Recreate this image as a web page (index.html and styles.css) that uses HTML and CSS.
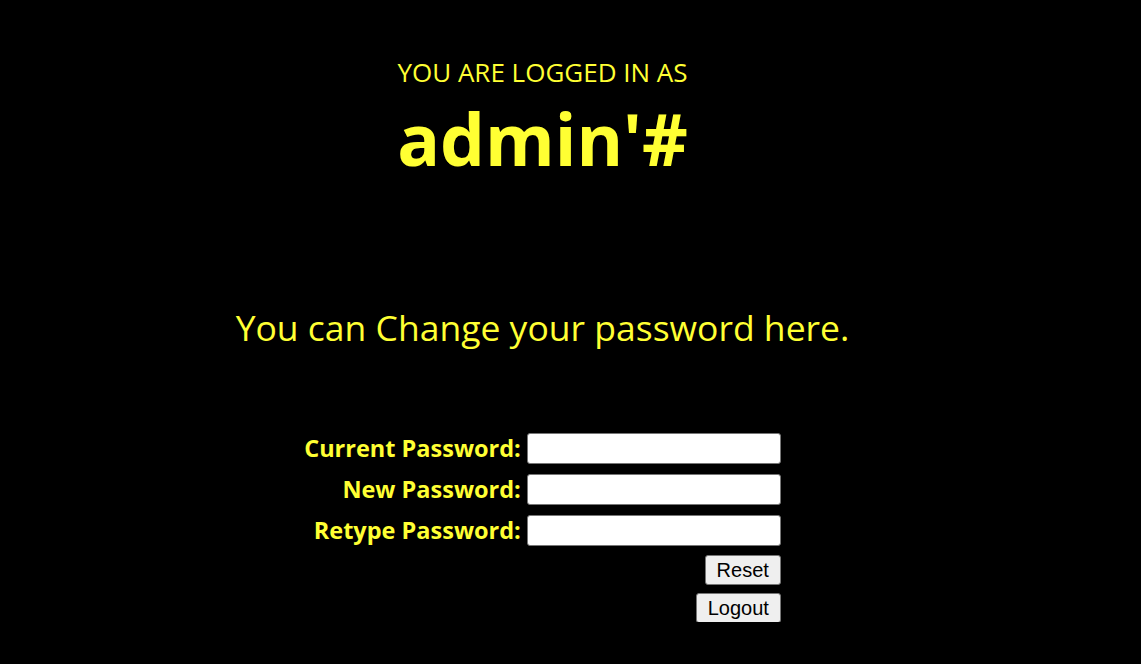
FILE: index.html
```html
<!DOCTYPE html>
<html lang="en">
<head>
    <meta charset="UTF-8">
    <title>Change Password</title>
    <link rel="stylesheet" href="styles.css">
</head>
<body>
    <div class="page">
        <div class="login-info">
            <p class="logged-as">YOU ARE LOGGED IN AS</p>
            <h1 class="username">admin'#</h1>
        </div>

        <h2 class="intro">You can Change your password here.</h2>

        <form class="pw-form">
            <table class="pw-table">
                <tr>
                    <td class="label">Current Password:</td>
                    <td><input type="password" class="field"></td>
                </tr>
                <tr>
                    <td class="label">New Password:</td>
                    <td><input type="password" class="field"></td>
                </tr>
                <tr>
                    <td class="label">Retype Password:</td>
                    <td><input type="password" class="field"></td>
                </tr>
                <tr>
                    <td></td>
                    <td class="actions"><button type="submit" class="btn">Reset</button></td>
                </tr>
                <tr>
                    <td></td>
                    <td class="actions"><button type="button" class="btn">Logout</button></td>
                </tr>
            </table>
        </form>
    </div>
</body>
</html>
```

FILE: styles.css
```css
body {
    margin: 0;
    background-color: #000;
    color: #ffff33;
    font-family: 'Open Sans', sans-serif;
}
.page {
    width: 1085px;
    display: flex;
    flex-direction: column;
    align-items: center;
    padding-top: 55px;
}
.login-info {
    text-align: center;
}
.logged-as {
    margin: 0;
    font-size: 26px;
    line-height: 34px;
}
.username {
    margin: 0;
    font-size: 71px;
    line-height: 100px;
    font-weight: 700;
}
.intro {
    margin: 113px 0 0;
    font-size: 35.5px;
    font-weight: 400;
    line-height: 50px;
}
.pw-form {
    margin-top: 81px;
}
.pw-table {
    border-collapse: separate;
    border-spacing: 6px 10px;
    margin: -10px 0;
}
.pw-table td {
    padding: 0;
}
.label {
    text-align: right;
    font-weight: 700;
    font-size: 23.5px;
    line-height: 31px;
}
.field {
    display: block;
    box-sizing: border-box;
    width: 254px;
    height: 31px;
    margin: 0;
    border: 1px solid #767676;
    border-radius: 3px;
    background: #fff;
}
.btn {
    display: block;
    margin: -1px 0 -1px auto;
    font-family: 'Liberation Sans', Arial, sans-serif;
    font-size: 20px;
    height: 30px;
    padding: 0 11px;
    background-color: #efefef;
    border: 1px solid #767676;
    border-radius: 3px;
    color: #000;
}
```
